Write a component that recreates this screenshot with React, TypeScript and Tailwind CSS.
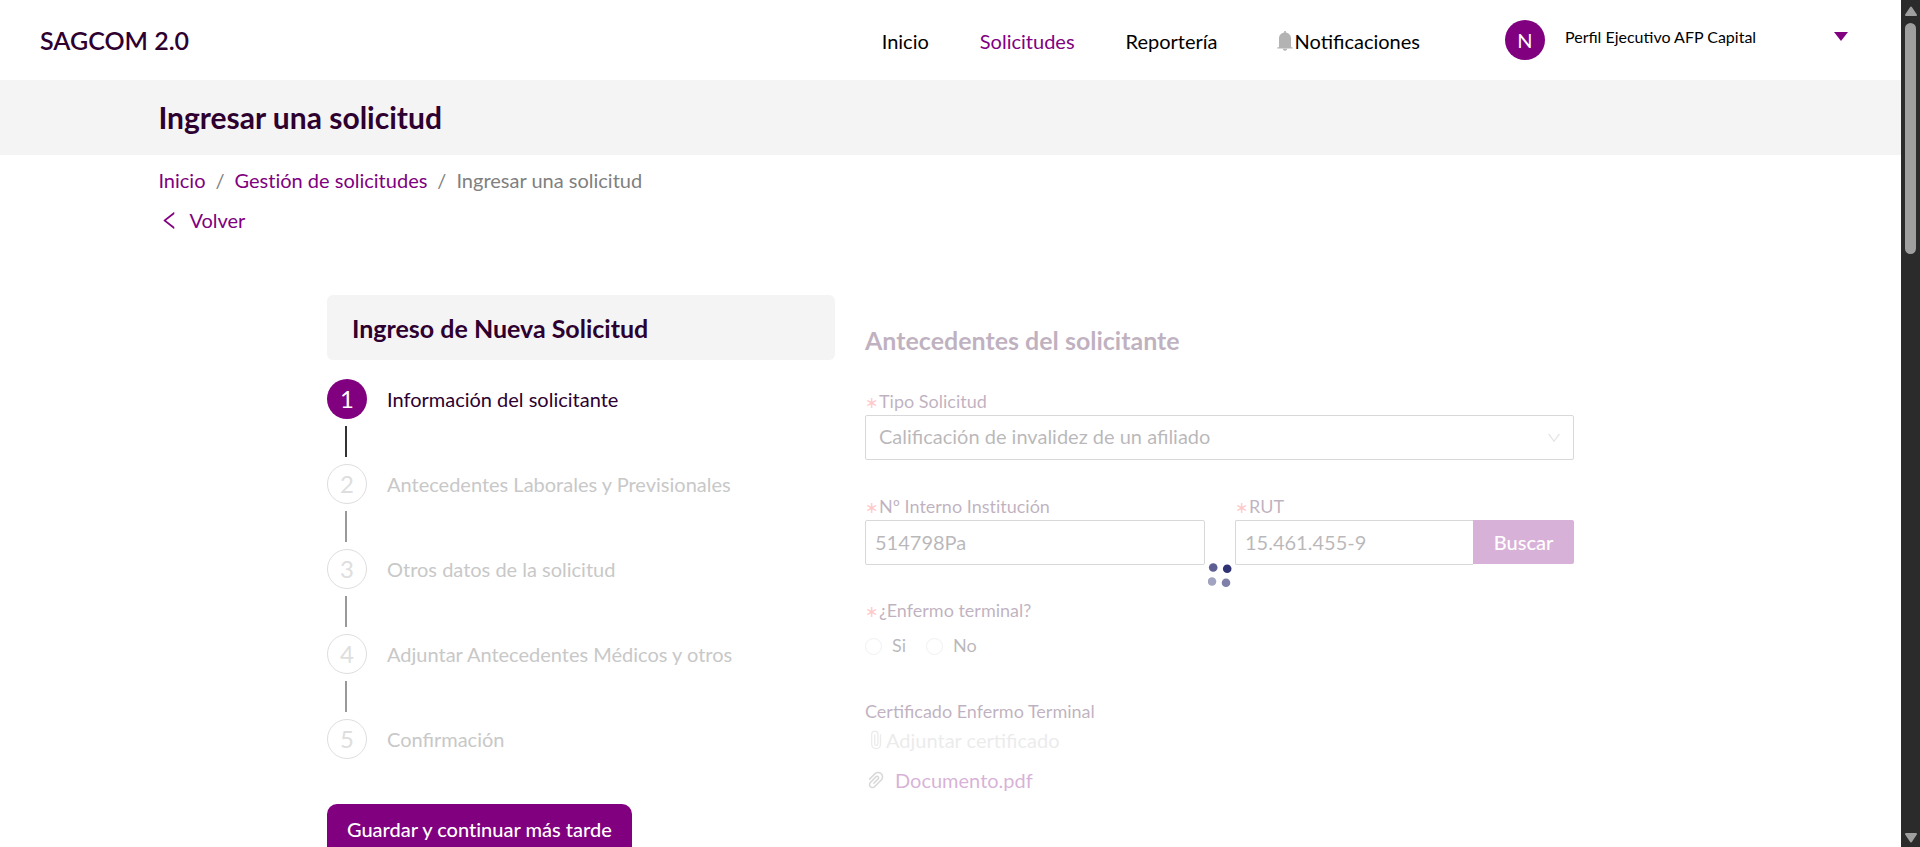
import type { ReactNode } from "react";
import { AiOutlineDown, AiOutlineLeft, AiOutlinePaperClip } from "react-icons/ai";

const steps = [
  "Información del solicitante",
  "Antecedentes Laborales y Previsionales",
  "Otros datos de la solicitud",
  "Adjuntar Antecedentes Médicos y otros",
  "Confirmación",
];

function BellIcon() {
  return (
    <svg viewBox="0 0 16 20" className="h-5 w-4" fill="#b3b3b3" aria-hidden="true">
      <path d="M7.200 0h1.600v1.600c3.100.4 5.200 2.900 5.200 6v8.600h1.200q.5 0 .5.500v.7H.3v-.7q0-.5.5-.5H2V7.600c0-3.100 2.100-5.600 5.200-6z" />
      <path d="M5.800 17.800h4.400a2.200 2 0 0 1-4.400 0z" />
    </svg>
  );
}

function ClipIcon() {
  return (
    <svg viewBox="0 0 12 20" className="h-5 w-3" fill="none" stroke="currentColor" strokeWidth="1.300" strokeLinecap="round" aria-hidden="true">
      <path d="M10.500 5v9.300a4.400 4.400 0 0 1-8.800 0V4.200a3.100 3.100 0 0 1 6.200 0v9.600a1.600 1.600 0 0 1-3.200 0V5" />
    </svg>
  );
}

function Header() {
  return (
    <header className="flex h-20 shrink-0 items-center pl-10 pr-[52px]">
      <a href="#" className="pt-0.5 text-[25px] font-semibold text-[#2d0030]">SAGCOM 2.0</a>
      <nav className="ml-auto flex items-center gap-[51px] pt-0.5 text-xl text-black">
        <a href="#">Inicio</a>
        <a href="#" className="text-[#800080]">Solicitudes</a>
        <a href="#">Reportería</a>
        <a href="#" className="ml-2 flex items-center gap-0.5">
          <BellIcon />
          Notificaciones
        </a>
      </nav>
      <button type="button" className="ml-[85px] flex w-[344px] items-center pr-px text-left">
        <span className="flex size-10 items-center justify-center rounded-full bg-[#800080] text-xl text-white">N</span>
        <span className="ml-5 pb-1.5 text-base text-black">Perfil Ejecutivo AFP Capital</span>
        <svg viewBox="0 0 14 9" className="mb-2 ml-auto h-[9px] w-3.5" fill="#800080" aria-hidden="true">
          <path d="M0 0h14L7 9z" />
        </svg>
      </button>
    </header>
  );
}

function Steps() {
  return (
    <ol className="mt-[19px] flex flex-col gap-[7px]">
      {steps.map((label, i) => (
        <li key={label} className="flex flex-col gap-[7px]">
          <div className="flex items-center gap-5">
            <span
              className={
                i === 0
                  ? "flex size-10 items-center justify-center rounded-full bg-[#800080] text-2xl text-white"
                  : "flex size-10 items-center justify-center rounded-full border border-[#dedede] text-2xl text-[#dedede]"
              }
            >
              {i + 1}
            </span>
            <span className={i === 0 ? "text-xl text-[#2d0030]" : "text-xl text-[#c8c8c8]"}>{label}</span>
          </div>
          {i < steps.length - 1 && (
            <span className={i === 0 ? "ml-[18px] h-[31px] w-0.5 bg-[#333]" : "ml-[18px] h-[31px] w-0.5 bg-[#999]"} />
          )}
        </li>
      ))}
    </ol>
  );
}

function Required({ children }: { children: ReactNode }) {
  return (
    <>
      <span className="inline-block w-3.5 text-base leading-4 text-[#ff4d4f]" aria-hidden="true">∗</span>
      {children}
    </>
  );
}

function Spinner() {
  return (
    <svg viewBox="0 0 24 24" className="absolute left-1/2 top-[268px] size-6 -translate-x-1/2" role="status" aria-label="Cargando" fill="#2f3273">
      <circle cx="5.2" cy="4.500" r="4.300" opacity=".78" />
      <circle cx="19.200" cy="5.800" r="4.300" />
      <circle cx="4" cy="18.500" r="4.300" opacity=".45" />
      <circle cx="18" cy="19.700" r="4.300" opacity=".62" />
    </svg>
  );
}

function ApplicantForm() {
  const label = "block text-lg leading-7 text-[#330033]";
  const field = "h-[45px] w-full rounded-xs border border-[#808080] bg-transparent text-xl text-[#1a141a]";
  return (
    <section className="relative">
      <form className="pt-[25px] opacity-30">
        <h2 className="text-[25px] leading-10 font-bold text-[#330033]">Antecedentes del solicitante</h2>

        <div className="mt-[27px]">
          <label htmlFor="tipo" className={label}><Required>Tipo Solicitud</Required></label>
          <div className="relative">
            <select id="tipo" className={`${field} appearance-none px-[13px] pb-[3px]`}>
              <option>Calificación de invalidez de un afiliado</option>
            </select>
            <AiOutlineDown className="pointer-events-none absolute right-3 top-[15px] size-4 text-[#aaa]" />
          </div>
        </div>

        <div className="mt-8 grid grid-cols-[340fr_339fr] gap-[30px]">
          <div>
            <label htmlFor="interno" className={`${label} [font-variant-ligatures:none]`}><Required>Nº Interno Institución</Required></label>
            <input id="interno" defaultValue="514798Pa" className={`${field} px-[9px] pb-0.5`} />
          </div>
          <div>
            <label htmlFor="rut" className={label}><Required>RUT</Required></label>
            <div className="flex">
              <input id="rut" defaultValue="15.461.455-9" className="h-[45px] w-full min-w-0 flex-1 rounded-l-xs border border-r-0 border-[#808080] bg-transparent px-[9px] pb-0.5 text-xl text-[#1a141a]" />
              <button type="button" className="h-11 w-[101px] rounded-r-xs bg-[#800080] text-xl font-medium text-white">Buscar</button>
            </div>
          </div>
        </div>

        <fieldset className="mt-[31px]">
          <legend className={label}><Required>¿Enfermo terminal?</Required></legend>
          <div className="mt-[7px] flex gap-5 text-lg leading-7 text-[#1a141a]">
            {["Si", "No"].map((v) => (
              <label key={v} className="flex items-center gap-2.5">
                <input type="radio" name="terminal" value={v} className="mt-[3px] size-[17px] appearance-none rounded-full border border-[#d0d0d0]" />
                {v}
              </label>
            ))}
          </div>
        </fieldset>

        <div className="mt-[38px]">
          <span className={label}>Certificado Enfermo Terminal</span>
          <button type="button" className="flex items-center gap-1 pl-[5px] text-xl leading-[30px] text-[#bfbfbf]">
            <ClipIcon />
            Adjuntar certificado
          </button>
          <a href="#" className="mt-2.5 flex items-center gap-2 text-xl leading-[30px] text-[#800080]">
            <AiOutlinePaperClip className="size-[22px] text-[#808080]" />
            Documento.pdf
          </a>
        </div>
      </form>
      <Spinner />
    </section>
  );
}

function ScrollRail() {
  return (
    <div className="flex w-[19px] shrink-0 flex-col items-center bg-[#2b2b2b] pb-1 pt-1.5" aria-hidden="true">
      <svg viewBox="0 0 12 10" className="h-2.5 w-3" fill="#9f9f9f" stroke="#9f9f9f" strokeWidth="2" strokeLinejoin="round">
        <path d="M6 1.500 11 9H1z" />
      </svg>
      <div className="mt-[7px] h-[231px] w-[11px] rounded-full bg-[#9f9f9f]" />
      <svg viewBox="0 0 12 10" className="mt-auto h-2.5 w-3" fill="#9f9f9f" stroke="#9f9f9f" strokeWidth="2" strokeLinejoin="round">
        <path d="M1 1h10L6 8.500z" />
      </svg>
    </div>
  );
}

export default function App() {
  return (
    <div className="flex h-screen overflow-hidden bg-white font-['Lato',sans-serif]">
      <div className="min-w-0 flex-1 overflow-hidden">
        <Header />
        <div className="flex h-[75px] items-center bg-[#f4f4f4] px-[8.333%] pb-0.5">
          <h1 className="text-3xl font-bold text-[#2d0030]">Ingresar una solicitud</h1>
        </div>
        <main className="px-[8.333%] pt-[11px]">
          <nav className="flex gap-2.5 text-xl leading-7 text-[#808080]" aria-label="Ruta">
            <a href="#" className="text-[#800080]">Inicio</a>
            <span>/</span>
            <a href="#" className="text-[#800080] [font-variant-ligatures:none]">Gestión de solicitudes</a>
            <span>/</span>
            <span>Ingresar una solicitud</span>
          </nav>
          <a href="#" className="mt-3 flex items-center gap-2 text-xl leading-7 text-[#800080]">
            <AiOutlineLeft className="size-[23px]" />
            Volver
          </a>
          <div className="mx-auto mt-[61px] grid max-w-[1247px] grid-cols-[508fr_709fr] gap-[30px]">
            <section>
              <h2 className="flex h-[65px] items-center rounded-md bg-[#f4f4f4] px-[25px] pt-0.5 text-[25px] font-bold text-[#2d0030]">
                Ingreso de Nueva Solicitud
              </h2>
              <Steps />
              <button type="button" className="mt-[45px] h-[52px] rounded-[10px] bg-[#800080] px-5 pb-0.5 text-xl font-medium text-white [font-variant-ligatures:none]">
                Guardar y continuar más tarde
              </button>
            </section>
            <ApplicantForm />
          </div>
        </main>
      </div>
      <ScrollRail />
    </div>
  );
}
